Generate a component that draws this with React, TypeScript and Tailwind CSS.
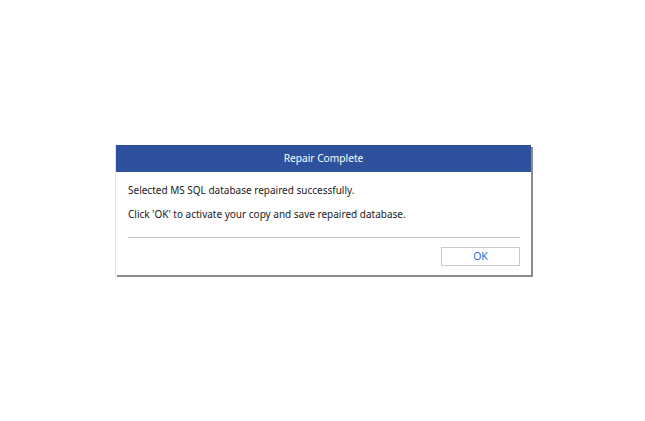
export default function App() {
  return (
    <div
      className="w-[645px] h-[421px] bg-white pl-[115px] pt-[145px]"
      style={{ fontFamily: '"Noto Sans", "Open Sans", sans-serif' }}
    >
      <div className="w-[416px] bg-white border-l border-[#e2e2e2] shadow-[2px_2px_0_#8c8c8c]">
        <div className="h-[27px] bg-[#2d519d] text-white text-[10.2px] flex items-center justify-center">
          Repair Complete
        </div>
        <div className="pl-[12px] pr-[11px] text-[10px] text-[#1a1a1a]">
          <p className="mt-[6px] leading-[24px]">Selected MS SQL database repaired successfully.</p>
          <p className="leading-[24px]">Click 'OK' to activate your copy and save repaired database.</p>
          <div className="mt-[11px] h-px bg-[#c6c6c6]" />
          <div className="flex justify-end pt-[9px] pb-[9px]">
            <button className="w-[79px] h-[19px] border border-[#cacaca] bg-white text-[10.5px] text-[#1f6fd6] flex items-center justify-center">
              OK
            </button>
          </div>
        </div>
      </div>
    </div>
  );
}
